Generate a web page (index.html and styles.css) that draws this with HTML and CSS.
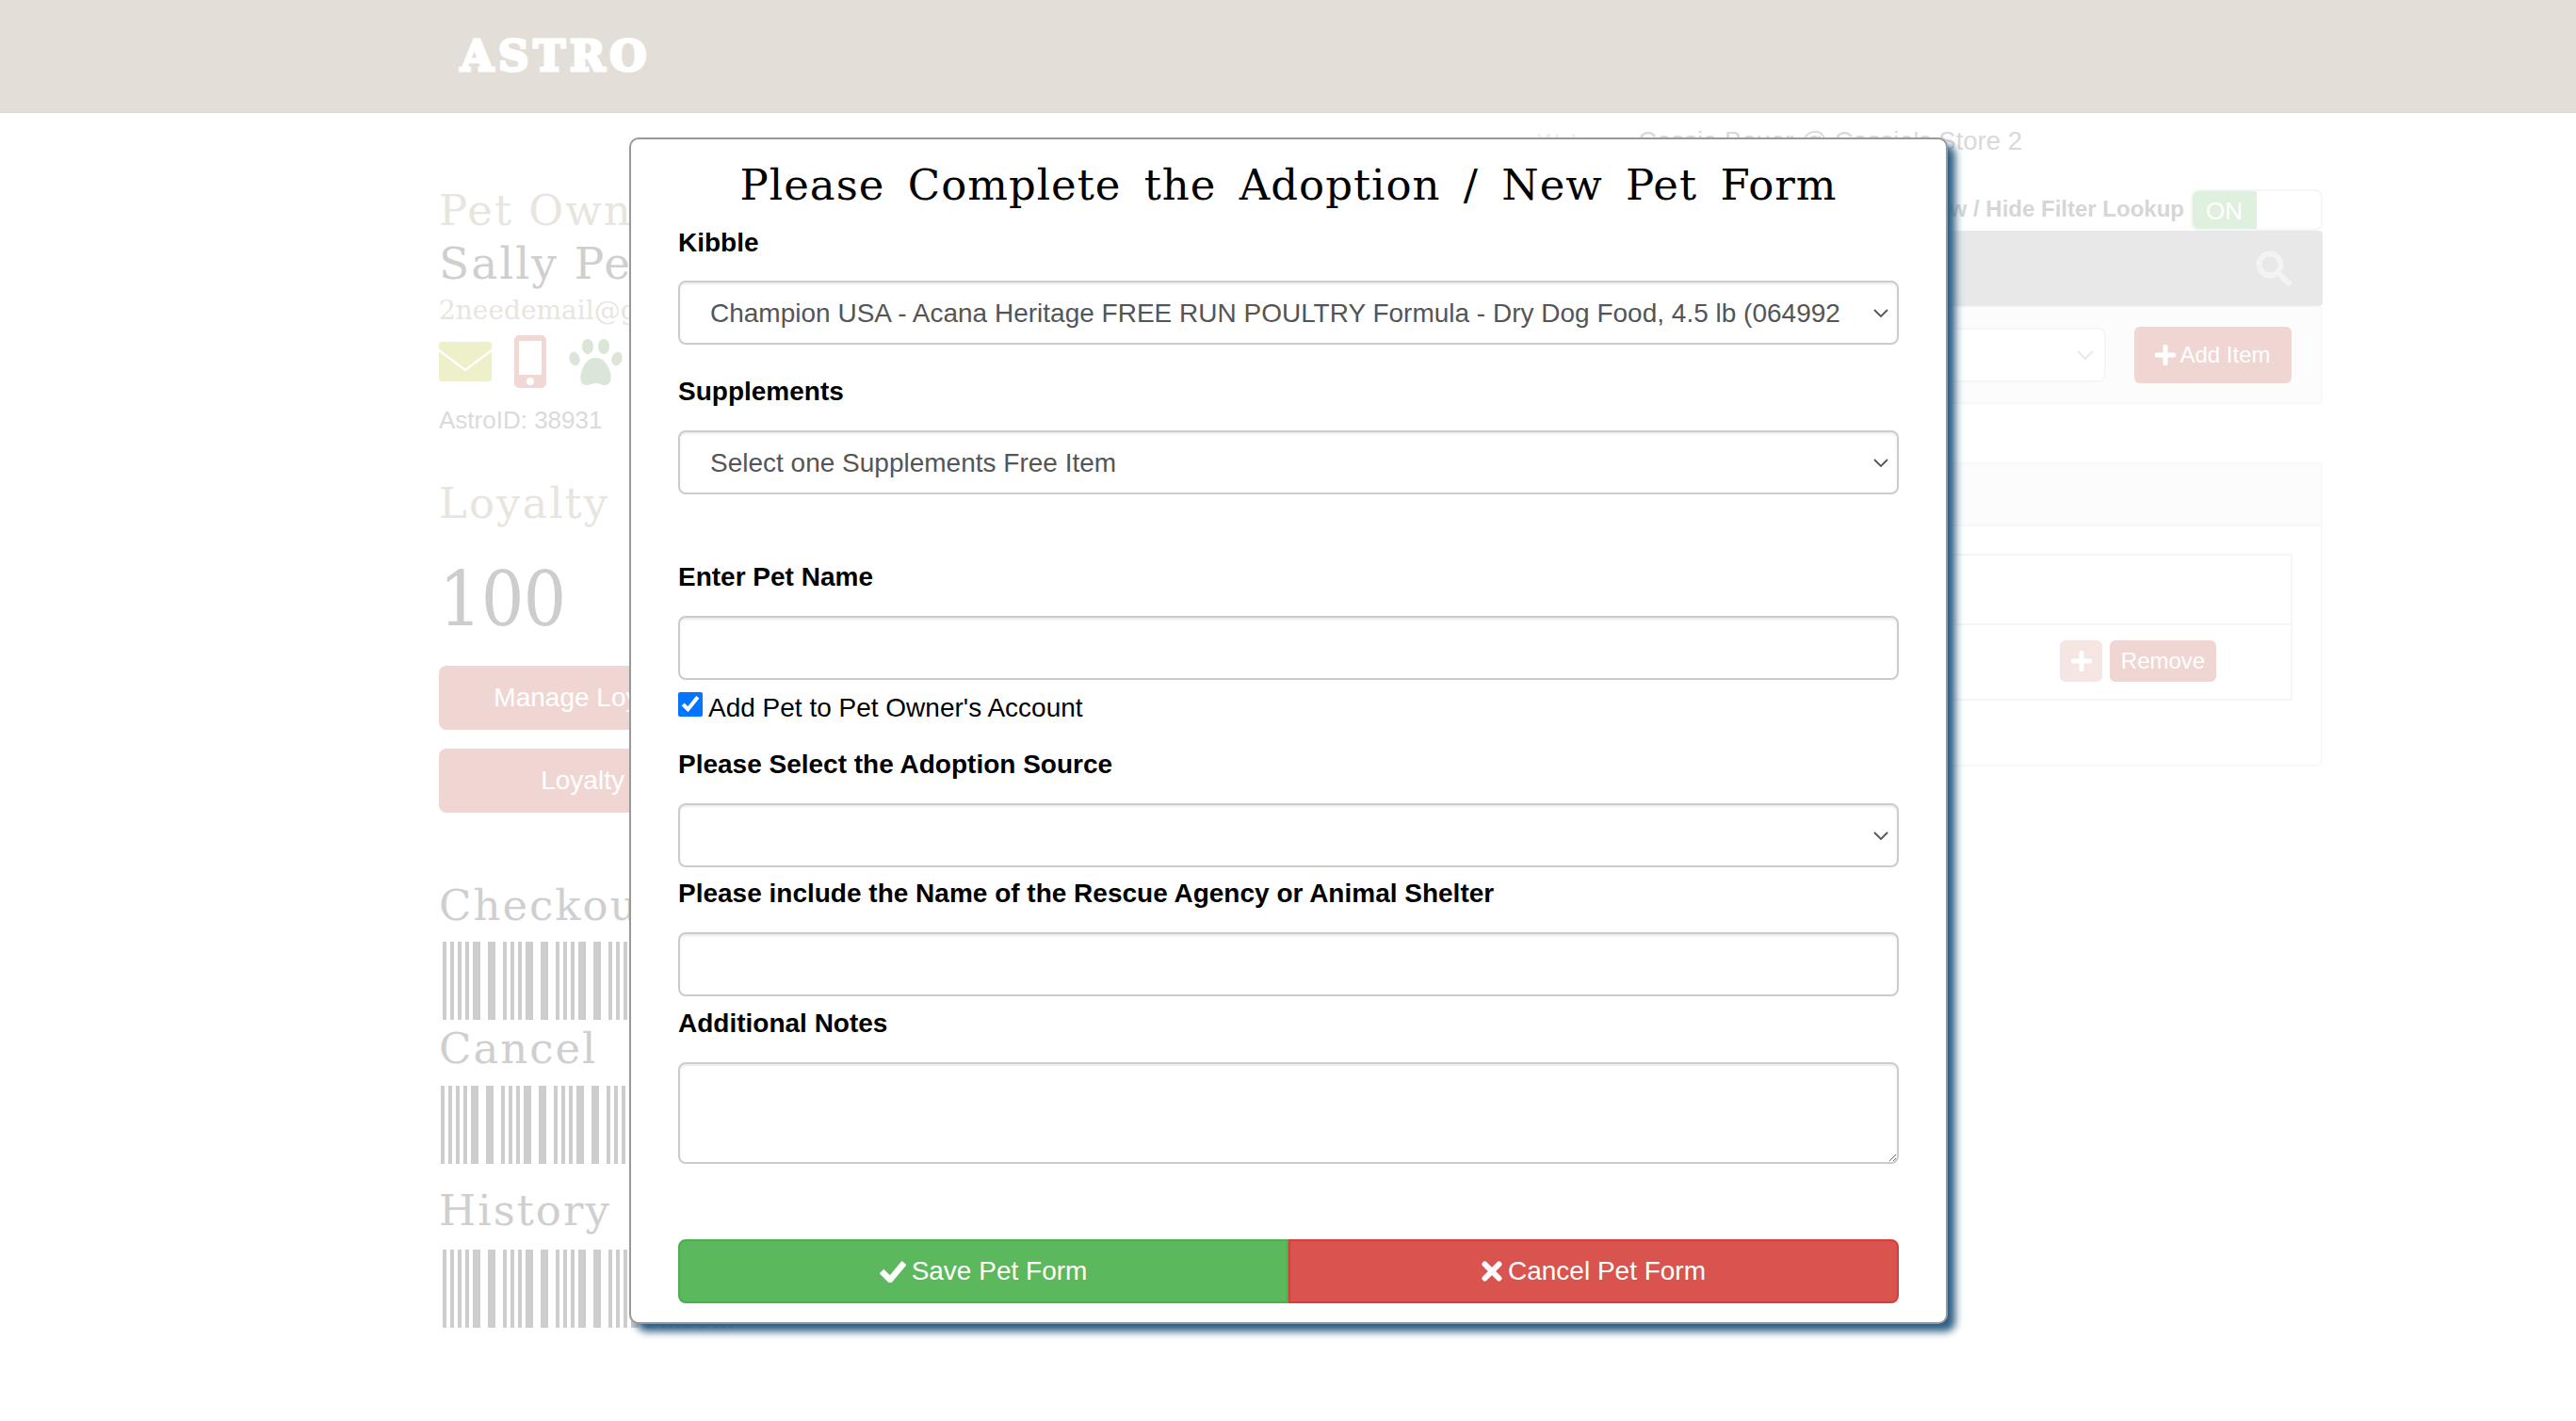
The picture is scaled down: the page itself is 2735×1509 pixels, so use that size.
FILE: index.html
```html
<!DOCTYPE html>
<html lang="en">
<head>
    <meta charset="UTF-8">
    <title>Astro - Pet Owner</title>
    <link rel="stylesheet" href="styles.css">
</head>
<body>
    <header class="top-bar">
        <div class="logo">ASTRO</div>
    </header>

    <main class="page">
        <section class="owner-col">
            <h2 class="owner-title">Pet Owner</h2>
            <h2 class="owner-name">Sally Peterson</h2>
            <div class="owner-email">2needemail@gmail.com</div>
            <div class="owner-icons">
                <svg class="icon-mail" viewBox="0 0 56 42"><rect width="56" height="42" rx="3" fill="#eef0c9"/><path d="M0 9l28 21L56 9" fill="none" stroke="#fff" stroke-width="2.500"/></svg>
                <svg class="icon-phone" viewBox="0 0 34 56"><path fill="#f2d8d4" fill-rule="evenodd" d="M5 0h24a5 5 0 0 1 5 5v46a5 5 0 0 1-5 5H5a5 5 0 0 1-5-5V5a5 5 0 0 1 5-5zM5 6v36h24V6zM17 45a4 4 0 1 0 0 8 4 4 0 0 0 0-8z"/></svg>
                <svg class="icon-paw" viewBox="0 0 57 49"><g fill="#dbe5d8"><ellipse cx="6" cy="21" rx="5.500" ry="7.500" transform="rotate(-18 6 21)"/><ellipse cx="20" cy="8" rx="6" ry="8"/><ellipse cx="37" cy="8" rx="6" ry="8"/><ellipse cx="51" cy="21" rx="5.500" ry="7.500" transform="rotate(18 51 21)"/><path d="M28.500 20c-8 0-12 6-15 14-2 6-2 15 5 15 4 0 6-2 10-2s6 2 10 2c7 0 7-9 5-15-3-8-7-14-15-14z"/></g></svg>
            </div>
            <div class="owner-id">AstroID: 38931</div>

            <h2 class="section-title light">Loyalty</h2>
            <div class="loyalty-points">100</div>
            <a class="side-btn">Manage Loyalty Points</a>
            <a class="side-btn">Loyalty History</a>

            <h2 class="section-title checkout-title">Checkout</h2>
            <div class="barcode"></div>
            <h2 class="section-title cancel-title">Cancel</h2>
            <div class="barcode shifted"></div>
            <h2 class="section-title history-title">History</h2>
            <div class="barcode"></div>
        </section>

        <section class="work-col">
            <div class="user-line"><span class="user-hello">Welcome</span> Cassie Bauer @ Cassie's Store 2</div>
            <div class="filter-row">
                <span class="filter-label">Show / Hide Filter Lookup</span>
                <span class="toggle"><span class="toggle-on">ON</span></span>
            </div>
            <div class="search-bar">
                <svg class="search-icon" viewBox="0 0 38 38"><circle cx="15" cy="15" r="11.500" fill="none" stroke="#f3f3f3" stroke-width="6"/><path d="M24 24l11 11" stroke="#f3f3f3" stroke-width="6" stroke-linecap="round"/></svg>
            </div>
            <div class="add-panel">
                <div class="fake-select">
                    <svg viewBox="0 0 18 10"><path d="M1 1l8 8 8-8" fill="none" stroke="#e8e8e8" stroke-width="2"/></svg>
                </div>
                <a class="add-btn">
                    <svg viewBox="0 0 22 22"><path d="M11 2v18M2 11h18" stroke="#fff" stroke-width="5" stroke-linecap="round"/></svg>
                    Add Item
                </a>
            </div>
            <div class="items-panel">
                <div class="items-head"></div>
                <div class="items-body">
                    <div class="items-table">
                        <div class="items-row"></div>
                        <div class="items-row actions">
                            <a class="small-btn pale">
                                <svg viewBox="0 0 22 22"><path d="M11 2v18M2 11h18" stroke="#fff" stroke-width="5" stroke-linecap="round"/></svg>
                            </a>
                            <a class="small-btn">Remove</a>
                        </div>
                    </div>
                </div>
            </div>
        </section>
    </main>

    <!-- adoption popup -->
    <div class="pet-modal">
        <h1 class="modal-title">Please Complete the Adoption / New Pet Form</h1>
        <form>
            <label class="form-label first-label">Kibble</label>
            <div class="select-wrap">
                <select class="form-field">
                    <option>Champion USA - Acana Heritage FREE RUN POULTRY Formula - Dry Dog Food, 4.5 lb (064992714277)</option>
                </select>
                <svg class="select-arrow" viewBox="0 0 16 10"><path d="M1 1l7 7 7-7" fill="none" stroke="#555" stroke-width="1.800"/></svg>
            </div>

            <label class="form-label gap-md">Supplements</label>
            <div class="select-wrap">
                <select class="form-field">
                    <option>Select one Supplements Free Item</option>
                </select>
                <svg class="select-arrow" viewBox="0 0 16 10"><path d="M1 1l7 7 7-7" fill="none" stroke="#555" stroke-width="1.800"/></svg>
            </div>

            <label class="form-label gap-lg">Enter Pet Name</label>
            <input class="form-field" type="text">

            <label class="check-row"><input type="checkbox" checked> Add Pet to Pet Owner's Account</label>

            <label class="form-label gap-check">Please Select the Adoption Source</label>
            <div class="select-wrap">
                <select class="form-field">
                    <option></option>
                </select>
                <svg class="select-arrow" viewBox="0 0 16 10"><path d="M1 1l7 7 7-7" fill="none" stroke="#555" stroke-width="1.800"/></svg>
            </div>

            <label class="form-label gap-sm">Please include the Name of the Rescue Agency or Animal Shelter</label>
            <input class="form-field" type="text">

            <label class="form-label gap-notes">Additional Notes</label>
            <textarea class="form-field notes"></textarea>

            <div class="modal-actions">
                <button type="button" class="btn-save">
                    <svg viewBox="0 0 28 24"><path d="M2 13l9 9L26 4" transform="translate(0 -1)" fill="none" stroke="#fff" stroke-width="6.500"/></svg>
                    Save Pet Form
                </button>
                <button type="button" class="btn-cancel">
                    <svg viewBox="0 0 22 22"><path d="M3.500 3.500l15 15M18.500 3.500l-15 15" stroke="#fff" stroke-width="6" stroke-linecap="round"/></svg>
                    Cancel Pet Form
                </button>
            </div>
        </form>
    </div>
</body>
</html>
```

FILE: styles.css
```css
* {
    box-sizing: border-box;
}

html, body {
    height: 100%;
}

body {
    margin: 0;
    overflow: hidden;
    background: #fff;
    font-family: "Liberation Sans", Arial, sans-serif;
    font-size: 28px;
    line-height: 40px;
    color: #000;
}

h1, h2 {
    margin: 0;
    font-weight: normal;
    font-family: "DejaVu Serif", serif;
}

/* header */
.top-bar {
    height: 120px;
    padding: 35px 0 0 489px;
    background: #e3dfd8;
    border-bottom: 1px solid #dcd8d0;
}

.logo {
    width: 220px;
    font-family: "DejaVu Serif", serif;
    font-weight: bold;
    font-size: 45px;
    line-height: 50px;
    letter-spacing: 5px;
    color: #fff;
    -webkit-text-stroke: 3px #fff;
}

/* faded page behind the popup */
.page {
    display: grid;
    grid-template-columns: 620px 1fr;
    width: 2000px;
    margin-left: 466px;
}

.owner-title {
    margin-top: 76px;
    font-size: 45px;
    line-height: 56px;
    letter-spacing: 2px;
    color: #e8e5df;
    white-space: nowrap;
}

.owner-name {
    font-size: 47px;
    line-height: 56px;
    letter-spacing: 2px;
    color: #cfcfcf;
    white-space: nowrap;
}

.owner-email {
    margin-top: 2px;
    font-family: "DejaVu Serif", serif;
    font-size: 28px;
    line-height: 40px;
    color: #e8e5df;
    white-space: nowrap;
}

.owner-icons {
    display: flex;
    align-items: center;
    gap: 24px;
    margin-top: 6px;
    height: 56px;
}

.icon-mail {
    width: 56px;
    height: 42px;
}

.icon-phone {
    width: 34px;
    height: 56px;
}

.icon-paw {
    width: 57px;
    height: 49px;
}

.owner-id {
    margin-top: 14px;
    font-size: 26px;
    color: #dadada;
}

.section-title {
    font-size: 45px;
    line-height: 56px;
    letter-spacing: 2px;
    color: #cfcfcf;
    white-space: nowrap;
}

.section-title.light {
    margin-top: 41px;
    color: #e8e5df;
}

.loyalty-points {
    margin: 29px 0 25px;
    font-family: "DejaVu Serif Condensed", "DejaVu Serif", serif;
    font-size: 80px;
    line-height: 90px;
    letter-spacing: -1px;
    color: #cdcdcd;
}

.side-btn {
    display: block;
    width: 400px;
    height: 68px;
    margin-top: 20px;
    background: #f0d6d2;
    border-radius: 8px;
    color: #fff;
    font-size: 28px;
    line-height: 68px;
    text-align: center;
    white-space: nowrap;
}

.checkout-title {
    margin: 71px 0 10px;
}

.barcode {
    width: 312px;
    height: 83px;
    margin-left: 4px;
    background:
        linear-gradient(#cdcdcd, #cdcdcd) 0 0 / 4px 100% no-repeat,
        linear-gradient(90deg,
            #cdcdcd 0 4px, transparent 4px 8px,
            #cdcdcd 8px 12px, transparent 12px 16px,
            #cdcdcd 16px 20px, transparent 20px 24px,
            #cdcdcd 24px 32px, transparent 32px 40px,
            #cdcdcd 40px 48px, transparent 48px 56px) 8px 0 / 56px 100% repeat-x;
}

.barcode.shifted {
    margin-left: 2px;
}

.cancel-title {
    margin: 3px 0 11px;
}

.history-title {
    margin: 22px 0 13px;
}

.work-col {
    min-width: 0;
}

.user-line {
    margin-top: 10px;
    padding-right: 319px;
    text-align: right;
    font-size: 27.500px;
    line-height: 40px;
    color: #d9d9d9;
}

.user-hello {
    font-size: 24px;
    color: #eeeeee;
}

.filter-row {
    display: flex;
    justify-content: flex-end;
    align-items: center;
    gap: 7px;
    margin-top: 30px;
    height: 44px;
}

.filter-label {
    margin-bottom: 3px;
    font-size: 24px;
    font-weight: bold;
    color: #d6d6d6;
}

.toggle {
    display: block;
    width: 140px;
    height: 44px;
    border: 2px solid #f6f6f6;
    border-radius: 8px;
}

.toggle-on {
    display: block;
    width: 68px;
    height: 40px;
    padding-left: 14px;
    background: #dff0df;
    border-radius: 6px 0 0 6px;
    color: #fff;
    font-size: 26px;
    line-height: 42px;
}

.search-bar {
    display: flex;
    justify-content: flex-end;
    align-items: center;
    height: 80px;
    padding-right: 33px;
    background: #e8e8e8;
    border-radius: 4px;
}

.search-icon {
    width: 38px;
    height: 38px;
}

.add-panel {
    display: flex;
    justify-content: flex-end;
    align-items: center;
    gap: 30px;
    height: 104px;
    padding-right: 31px;
    background: #fcfcfc;
    border: 2px solid #f8f8f8;
    border-radius: 4px;
}

.fake-select {
    display: flex;
    justify-content: flex-end;
    align-items: center;
    width: 600px;
    height: 58px;
    padding-right: 11px;
    background: #fff;
    border: 2px solid #f6f6f6;
    border-radius: 8px;
}

.fake-select svg {
    width: 18px;
    height: 10px;
}

.add-btn {
    display: flex;
    justify-content: center;
    align-items: center;
    gap: 4px;
    width: 167px;
    height: 60px;
    background: #f0d6d2;
    border-radius: 6px;
    color: #fff;
    font-size: 24px;
}

.add-btn svg {
    width: 22px;
    height: 22px;
}

.items-panel {
    height: 323px;
    margin-top: 62px;
    background: #fff;
    border: 2px solid #f8f8f8;
    border-radius: 6px;
}

.items-head {
    height: 66px;
    background: #fcfcfc;
    border-bottom: 2px solid #f8f8f8;
}

.items-body {
    padding: 29px 30px 0;
}

.items-table {
    border: 2px solid #f5f5f5;
}

.items-row {
    height: 72px;
}

.items-row.actions {
    display: flex;
    justify-content: flex-end;
    gap: 8px;
    height: 80px;
    padding: 16px 79px 0 0;
    border-top: 2px solid #f5f5f5;
}

.small-btn {
    display: flex;
    justify-content: center;
    align-items: center;
    width: 113px;
    height: 44px;
    background: #f0d6d2;
    border-radius: 6px;
    color: #fff;
    font-size: 24px;
}

.small-btn.pale {
    width: 45px;
    background: #f5e6e4;
}

.small-btn svg {
    width: 22px;
    height: 22px;
}

/* popup */
.pet-modal {
    position: absolute;
    left: 668px;
    top: 146px;
    width: 1400px;
    height: 1260px;
    padding: 0 50px;
    background: #fff;
    border: 2px solid #999;
    border-radius: 10px;
    box-shadow: 8px 8px 8px #2c5d82;
}

.modal-title {
    height: 90px;
    padding-top: 21px;
    font-size: 45px;
    line-height: 56px;
    letter-spacing: 1px;
    word-spacing: 9px;
    text-align: center;
    white-space: nowrap;
}

.form-label {
    display: block;
    margin-bottom: 21px;
    font-weight: bold;
    font-size: 28px;
    line-height: 40px;
}

.first-label {
    margin-bottom: 20px;
}

.gap-md {
    margin-top: 30px;
}

.gap-lg {
    margin-top: 68px;
}

.gap-check {
    margin-top: 20px;
}

.gap-sm {
    margin-top: 8px;
}

.gap-notes {
    margin-top: 9px;
}

.form-field {
    display: block;
    width: 100%;
    height: 68px;
    padding: 0 24px;
    background: #fff;
    border: 2px solid #ccc;
    border-radius: 8px;
    box-shadow: inset 0 2px 2px rgba(0, 0, 0, 0.075);
    color: #555;
    font-family: "Liberation Sans", Arial, sans-serif;
    font-size: 28px;
}

select.form-field {
    appearance: none;
    padding: 0 60px 0 32px;
}

.select-wrap {
    position: relative;
}

.select-arrow {
    position: absolute;
    top: 30px;
    right: 11px;
    width: 16px;
    height: 10px;
}

.notes {
    height: 108px;
    padding: 12px 24px;
}

.check-row {
    display: flex;
    align-items: center;
    gap: 6px;
    height: 40px;
    margin-top: 10px;
    font-size: 28px;
}

.check-row input {
    width: 26px;
    height: 26px;
    margin: 0 0 8px;
}

.modal-actions {
    display: grid;
    grid-template-columns: 648px 648px;
    margin-top: 80px;
}

.modal-actions button {
    display: flex;
    justify-content: center;
    align-items: center;
    gap: 6px;
    height: 68px;
    color: #fff;
    font-family: "Liberation Sans", Arial, sans-serif;
    font-size: 28px;
}

.btn-save {
    background: #5cb85c;
    border: 2px solid #4cae4c;
    border-radius: 8px 0 0 8px;
}

.btn-save svg {
    width: 28px;
    height: 24px;
}

.btn-cancel {
    background: #d9534f;
    border: 2px solid #d43f3a;
    border-radius: 0 8px 8px 0;
}

.btn-cancel svg {
    width: 22px;
    height: 22px;
}
```
